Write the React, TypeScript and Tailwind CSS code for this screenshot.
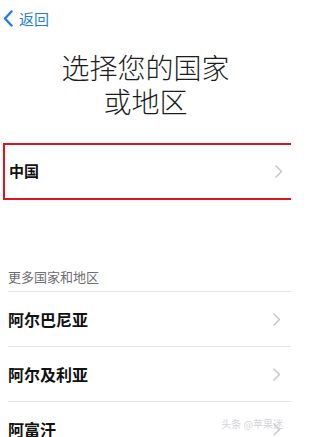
import React from "react";

const font = { fontFamily: '"Noto Sans CJK SC", "Noto Sans", sans-serif' };

const Chevron = () => (
  <svg width="8" height="13" viewBox="0 0 8 13" fill="none">
    <path d="M1 1l5.5 5.5L1 12" stroke="#c7c7cc" strokeWidth="1.5" strokeLinecap="round" strokeLinejoin="round" />
  </svg>
);

const countries = ["阿尔巴尼亚", "阿尔及利亚", "阿富汗"];

const App = () => {
  return (
    <div className="w-[291px] h-[437px] overflow-hidden bg-white relative" style={font}>
      {/* nav */}
      <div className="h-[36px] flex items-center pl-[3px]">
        <svg width="10" height="17" viewBox="0 0 10 17" fill="none">
          <path d="M8.5 1.5L2 8.5l6.5 7" stroke="#1f7ee6" strokeWidth="2.4" strokeLinecap="round" strokeLinejoin="round" />
        </svg>
        <span className="ml-[6px] text-[15px] leading-none text-[#1f7ee6]">返回</span>
      </div>

      {/* title */}
      <div className="mt-[14px] text-center text-[28px] leading-[34px] font-light text-[#1c1c1e]">
        <div>选择您的国家</div>
        <div>或地区</div>
      </div>

      {/* current selection */}
      <div className="mt-[25px] ml-[3px] h-[57px] border-2 border-r-0 border-[#e0141e] flex items-center justify-between pl-[4px] pr-[8px]">
        <span className="text-[15px] font-bold text-[#111]">中国</span>
        <Chevron />
      </div>

      {/* more */}
      <div className="mt-[67px] pl-[8px]">
        <div className="text-[13px] leading-[20px] text-[#6d6d72] pb-[4px] border-b border-[#e3e3e6]">
          更多国家和地区
        </div>
        {countries.map((name) => (
          <div
            key={name}
            className="h-[55px] flex items-center justify-between pr-[10px] border-b border-[#e3e3e6]"
          >
            <span className="text-[16px] font-bold text-[#111]">{name}</span>
            <Chevron />
          </div>
        ))}
      </div>

      <span className="absolute right-[8px] bottom-[6px] text-[10px] text-[#d4d4d8]">头条 @苹果迷</span>
    </div>
  );
};

export default App;
